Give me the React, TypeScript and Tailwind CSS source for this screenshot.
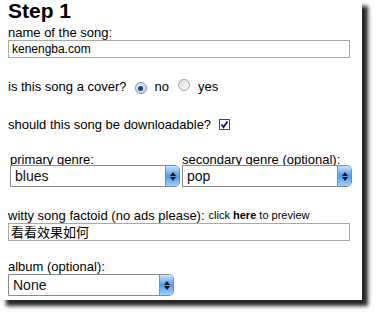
import React from "react";

const font = { fontFamily: '"Liberation Sans", Arial, "Noto Sans CJK SC", sans-serif' };

const Radio: React.FC<{ checked?: boolean }> = ({ checked }) => (
    <span className={`inline-flex items-center justify-center w-[12px] h-[12px] rounded-full border ${checked ? "border-[#7a8fb3] bg-gradient-to-br from-[#e8eef8] to-[#c6d3e8]" : "border-[#a0a0a0] bg-gradient-to-br from-[#dcdcdc] to-[#ffffff]"}`}>
        {checked && <span className="w-[5px] h-[5px] rounded-full bg-[#1d3f8a]" />}
    </span>
);

const Select: React.FC<{ value: string; width: string }> = ({ value, width }) => (
    <div className={`${width} h-[22px] flex items-stretch border border-[#8a8a8a] rounded-r-[5px] bg-white`}>
        <div className="flex-1 flex items-center pl-[4px] text-[14px] text-[#111]">{value}</div>
        <div className="w-[14px] rounded-r-[4px] border-l border-[#6d8fc4] bg-gradient-to-b from-[#c9e3ff] via-[#4f9bea] to-[#9fd0ff] flex flex-col items-center justify-center gap-[1px]">
            <svg width="6" height="4" viewBox="0 0 6 4"><path d="M3 0 L6 4 L0 4 Z" fill="#111" /></svg>
            <svg width="6" height="4" viewBox="0 0 6 4"><path d="M0 0 L6 0 L3 4 Z" fill="#111" /></svg>
        </div>
    </div>
);

export default function App() {
    return (
        <div className="w-[377px] h-[317px] bg-white" style={font}>
            <div className="w-[362px] h-[300px] bg-white pl-[8px] shadow-[6px_6px_4px_rgba(0,0,0,0.85)] text-[13px] text-black leading-[15px]">
                <div className="text-[21px] font-bold leading-[20px] pt-[1px]">Step 1</div>
                <div className="mt-[4px]">name of the song:</div>
                <div className="w-[342px] h-[18px] border border-[#a8a8a8] flex items-center pl-[3px] text-[12px]">kenengba.com</div>

                <div className="mt-[21px] flex items-center h-[15px]">
                    <span>is this song a cover?</span>
                    <span className="ml-[8px]"><Radio checked /></span>
                    <span className="ml-[8px]">no</span>
                    <span className="ml-[9px]"><Radio /></span>
                    <span className="ml-[8px]">yes</span>
                </div>

                <div className="mt-[23px] flex items-center h-[15px]">
                    <span>should this song be downloadable?</span>
                    <span className="ml-[8px] w-[11px] h-[11px] border border-[#1c4fa3] bg-white flex items-center justify-center">
                        <svg width="9" height="9" viewBox="0 0 9 9"><path d="M1.5 4.5 L3.5 7 L7.5 1.5" stroke="#14205a" strokeWidth="2" fill="none" /></svg>
                    </span>
                </div>

                <div className="mt-[20px] flex gap-[2px] pl-[2px]">
                    <div className="flex flex-col">
                        <div className="h-[13px]">primary genre:</div>
                        <Select value="blues" width="w-[170px]" />
                    </div>
                    <div className="flex flex-col">
                        <div className="h-[13px]">secondary genre (optional):</div>
                        <Select value="pop" width="w-[170px]" />
                    </div>
                </div>

                <div className="mt-[21px] flex items-end">
                    <span>witty song factoid (no ads please):</span>
                    <span className="ml-[4px] text-[11px]">click <b>here</b> to preview</span>
                </div>
                <div className="w-[342px] h-[18px] border border-[#a8a8a8] flex items-center pl-[2px] text-[13px]">看看效果如何</div>

                <div className="mt-[18px]">album (optional):</div>
                <Select value="None" width="w-[166px]" />
            </div>
        </div>
    );
}
